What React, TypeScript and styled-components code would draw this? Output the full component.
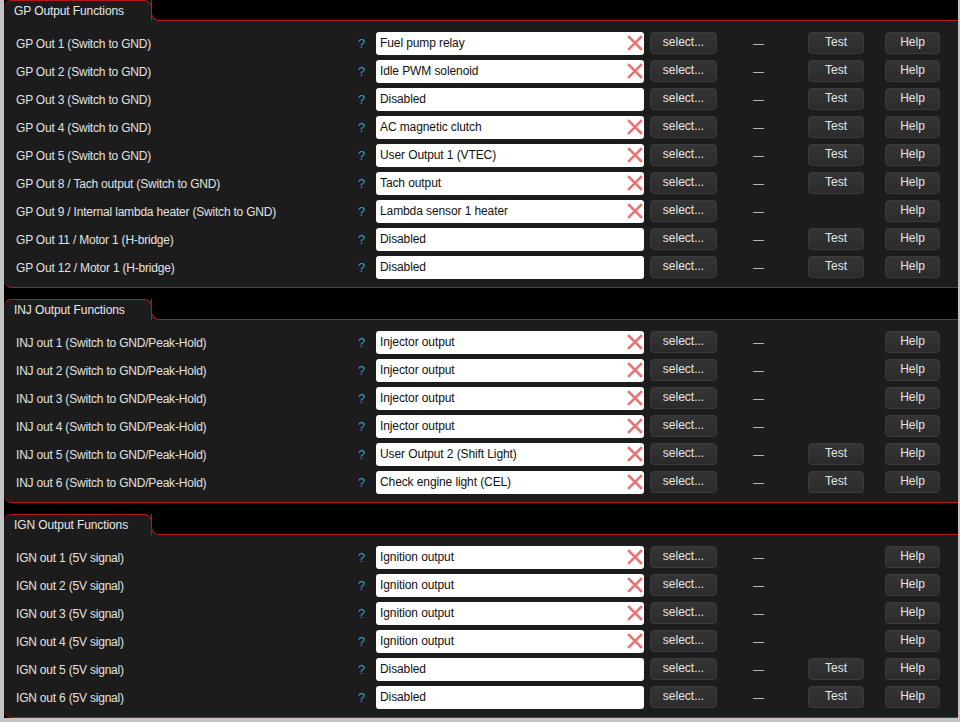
import styled, { createGlobalStyle } from "styled-components"

const GlobalStyle = createGlobalStyle`
  html, body { margin: 0; padding: 0; background: #c4c4c4; }
  body { font-family: "Liberation Sans", Arial, sans-serif; }
`

type Row = { label: string; value: string; clear: boolean; test: boolean }

const gpRows: Row[] = [
  { label: "GP Out 1 (Switch to GND)", value: "Fuel pump relay", clear: true, test: true },
  { label: "GP Out 2 (Switch to GND)", value: "Idle PWM solenoid", clear: true, test: true },
  { label: "GP Out 3 (Switch to GND)", value: "Disabled", clear: false, test: true },
  { label: "GP Out 4 (Switch to GND)", value: "AC magnetic clutch", clear: true, test: true },
  { label: "GP Out 5 (Switch to GND)", value: "User Output 1 (VTEC)", clear: true, test: true },
  { label: "GP Out 8 / Tach output (Switch to GND)", value: "Tach output", clear: true, test: true },
  { label: "GP Out 9 / Internal lambda heater (Switch to GND)", value: "Lambda sensor 1 heater", clear: true, test: false },
  { label: "GP Out 11 / Motor 1 (H-bridge)", value: "Disabled", clear: false, test: true },
  { label: "GP Out 12 / Motor 1 (H-bridge)", value: "Disabled", clear: false, test: true },
]

const injRows: Row[] = [
  { label: "INJ out 1 (Switch to GND/Peak-Hold)", value: "Injector output", clear: true, test: false },
  { label: "INJ out 2 (Switch to GND/Peak-Hold)", value: "Injector output", clear: true, test: false },
  { label: "INJ out 3 (Switch to GND/Peak-Hold)", value: "Injector output", clear: true, test: false },
  { label: "INJ out 4 (Switch to GND/Peak-Hold)", value: "Injector output", clear: true, test: false },
  { label: "INJ out 5 (Switch to GND/Peak-Hold)", value: "User Output 2 (Shift Light)", clear: true, test: true },
  { label: "INJ out 6 (Switch to GND/Peak-Hold)", value: "Check engine light (CEL)", clear: true, test: true },
]

const ignRows: Row[] = [
  { label: "IGN out 1 (5V signal)", value: "Ignition output", clear: true, test: false },
  { label: "IGN out 2 (5V signal)", value: "Ignition output", clear: true, test: false },
  { label: "IGN out 3 (5V signal)", value: "Ignition output", clear: true, test: false },
  { label: "IGN out 4 (5V signal)", value: "Ignition output", clear: true, test: false },
  { label: "IGN out 5 (5V signal)", value: "Disabled", clear: false, test: true },
  { label: "IGN out 6 (5V signal)", value: "Disabled", clear: false, test: true },
]

const RED = "#b3161d"

const Page = styled.div`
  padding: 0 2px 4px 4px;
  background: #c4c4c4;
`

const Frame = styled.div`
  background: #000;
  display: flex;
  flex-direction: column;
  gap: 11px;
`

const Section = styled.section`
  display: flex;
  flex-direction: column;
`

const Header = styled.div`
  display: flex;
  height: 21px;
  background: linear-gradient(#000 50%, #1c1c1c 50%);
`

const Tab = styled.div`
  width: 148px;
  box-sizing: border-box;
  background: #1c1c1c;
  border-top: 1px solid ${RED};
  border-right: 1px solid ${RED};
  border-top-left-radius: 7px;
  border-top-right-radius: 8px;
  color: #e8e8e8;
  font-size: 12px;
  line-height: 20px;
  padding-left: 10px;
  letter-spacing: -0.1px;
`

const Filler = styled.div`
  flex: 1;
  margin-left: -1px;
  background: #000;
  border-left: 1px solid ${RED};
  border-bottom: 1px solid ${RED};
  border-bottom-left-radius: 8px;
`

const Body = styled.div`
  background: #1c1c1c;
  padding: 8px 0 6px 12px;
  border-bottom: 1px solid ${RED};
  border-bottom-left-radius: 8px;
`

const RowGrid = styled.div`
  display: grid;
  grid-template-columns: 339px 21px 268px 73px 91px 77px 55px;
  align-items: center;
  height: 28px;
`

const Label = styled.span`
  color: #e2e2e2;
  font-size: 12px;
  letter-spacing: -0.2px;
  white-space: nowrap;
  padding-top: 2px;
`

const Hint = styled.span`
  color: #2a9fd8;
  font-size: 13px;
  padding-left: 3px;
`

const Field = styled.div`
  height: 23px;
  box-sizing: border-box;
  background: #fff;
  border-radius: 3px;
  display: flex;
  align-items: center;
  justify-content: space-between;
  padding: 0 1px 0 4px;
  color: #111;
  font-size: 12px;
  letter-spacing: -0.1px;
`

const Button = styled.button<{ $align: "start" | "end" }>`
  justify-self: ${(p) => p.$align};
  height: 22px;
  padding: 0 0 2px;
  box-sizing: border-box;
  background: linear-gradient(#353535, #2b2b2b);
  border: 1px solid #3b3b3b;
  border-radius: 4px;
  color: #e6e6e6;
  font-family: "Liberation Sans", Arial, sans-serif;
  font-size: 12px;
`

const SelectButton = styled(Button)`
  width: 67px;
`

const TestButton = styled(Button)`
  width: 56px;
`

const HelpButton = styled(Button)`
  width: 55px;
`

const Dash = styled.span`
  color: #d4d4d4;
  font-size: 11px;
  padding-left: 36px;
`

const Empty = styled.span``

function ClearIcon() {
  return (
    <svg width="16" height="16" viewBox="0 0 16 16">
      <path d="M2 2 L14 14 M14 2 L2 14" stroke="#e87474" strokeWidth="2.6" strokeLinecap="square" />
    </svg>
  )
}

function OutputRow({ row }: { row: Row }) {
  return (
    <RowGrid>
      <Label>{row.label}</Label>
      <Hint>?</Hint>
      <Field>
        <span>{row.value}</span>
        {row.clear && <ClearIcon />}
      </Field>
      <SelectButton $align="end">select...</SelectButton>
      <Dash>—</Dash>
      {row.test ? <TestButton $align="start">Test</TestButton> : <Empty />}
      <HelpButton $align="start">Help</HelpButton>
    </RowGrid>
  )
}

function OutputSection({ title, rows }: { title: string; rows: Row[] }) {
  return (
    <Section>
      <Header>
        <Tab>{title}</Tab>
        <Filler />
      </Header>
      <Body>
        {rows.map((r, i) => (
          <OutputRow key={i} row={r} />
        ))}
      </Body>
    </Section>
  )
}

export default function App() {
  return (
    <>
      <GlobalStyle />
      <Page>
        <Frame>
          <OutputSection title="GP Output Functions" rows={gpRows} />
          <OutputSection title="INJ Output Functions" rows={injRows} />
          <OutputSection title="IGN Output Functions" rows={ignRows} />
        </Frame>
      </Page>
    </>
  )
}
